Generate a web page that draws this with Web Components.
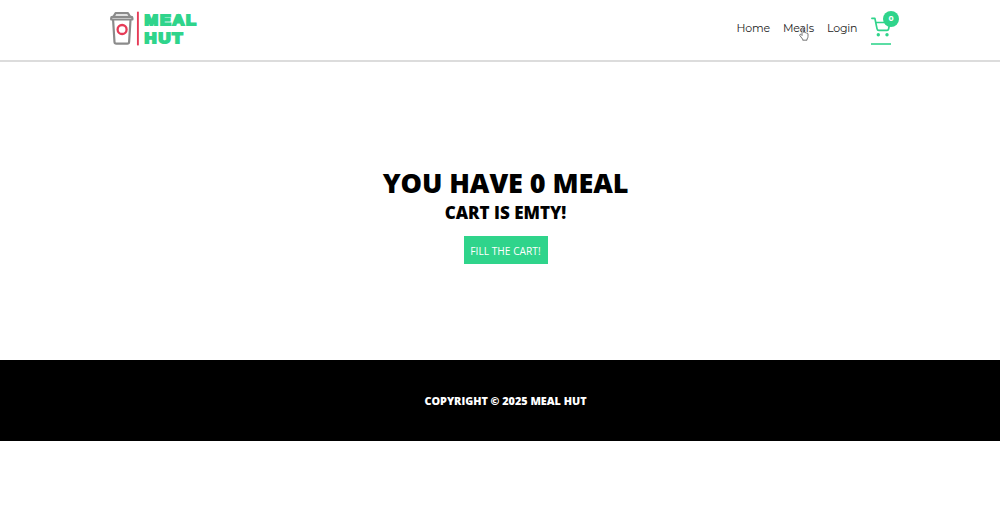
<!DOCTYPE html>
<html lang="en">
<head>
<meta charset="utf-8">
<title>Meal Hut</title>
<style>
  body {
    margin: 0;
    background: #fff;
    overflow: hidden;
    font-family: "Open Sans", sans-serif;
  }
</style>
</head>
<body>
<meal-app></meal-app>
<script>
const GREEN = "#2fd48b";

class MealLogo extends HTMLElement {
  constructor() {
    super();
    this.attachShadow({ mode: "open" });
  }

  static get styles() {
    return /* css */`
      :host { display: block; width: 90px; height: 38px; }
      svg { display: block; }
      text {
        font: 700 14.8px "Liberation Sans", sans-serif;
        letter-spacing: 1.5px;
        fill: ${GREEN};
        stroke: ${GREEN};
        stroke-width: 1.9px;
        stroke-linejoin: miter;
      }
    `;
  }

  connectedCallback() {
    this.shadowRoot.innerHTML = /* html */`
    <style>${MealLogo.styles}</style>
    <svg width="90" height="38" viewBox="0 0 90 38" fill="none">
      <g stroke="#8b8b8b" stroke-width="2.2" stroke-linejoin="round" stroke-linecap="round">
        <path d="M3.7 6.4 5.5 3.2H17.9L19.9 6.4"/>
        <path d="M1.2 9.5V8Q1.2 6.8 2.4 6.8H21.2Q22.4 6.8 22.4 8V9.5Z"/>
        <path d="M3.1 10 4.5 32Q4.6 33.6 6.3 33.6H17.3Q19 33.6 19.1 32L20.5 10"/>
      </g>
      <circle cx="12.1" cy="19.5" r="4.5" stroke="#e63b57" stroke-width="2.3"/>
      <path d="M27.9 1.7V35.4" stroke="#e63b57" stroke-width="1.9"/>
      <text x="34.6" y="15.4" textLength="53" lengthAdjust="spacingAndGlyphs">MEAL</text>
      <text x="34.6" y="32.6" textLength="39.5" lengthAdjust="spacingAndGlyphs">HUT</text>
    </svg>`;
  }
}

class NavItem extends HTMLElement {
  constructor() {
    super();
    this.attachShadow({ mode: "open" });
  }

  static get styles() {
    return /* css */`
      :host {
        display: block;
        width: var(--item-width, auto);
        font: 400 11px/16px Montserrat, Inter, sans-serif;
        letter-spacing: var(--item-spacing, 0);
        color: #1c1c1c;
        white-space: nowrap;
      }
    `;
  }

  connectedCallback() {
    this.shadowRoot.innerHTML = /* html */`
    <style>${NavItem.styles}</style>
    <slot></slot>`;
  }
}

class CartLink extends HTMLElement {
  constructor() {
    super();
    this.attachShadow({ mode: "open" });
  }

  static get styles() {
    return /* css */`
      :host {
        display: block;
        position: relative;
        width: 20px;
        height: 27px;
        border-bottom: 2px solid #5bdda4;
      }
      svg { display: block; }
      .badge {
        position: absolute;
        left: 12px;
        top: -5px;
        width: 16px;
        height: 16px;
        border-radius: 50%;
        background: ${GREEN};
        color: #fff;
        font: 700 7.5px/16px Montserrat, Inter, sans-serif;
        text-align: center;
      }
    `;
  }

  connectedCallback() {
    this.shadowRoot.innerHTML = /* html */`
    <style>${CartLink.styles}</style>
    <svg width="20" height="22" viewBox="0 0 20 22" fill="none" stroke="${GREEN}" stroke-width="1.7" stroke-linecap="round" stroke-linejoin="round">
      <path d="M.9 2.3H3.9L6 12.6Q6.3 14.4 7.8 14.4H16.1Q17.3 14.4 17.6 13L18.9 6.5H4.8"/>
      <circle cx="7.3" cy="18.7" r="1.7" fill="${GREEN}" stroke="none"/>
      <circle cx="16" cy="18.7" r="1.7" fill="${GREEN}" stroke="none"/>
    </svg>
    <span class="badge"><slot></slot></span>`;
  }
}

class HandPointer extends HTMLElement {
  constructor() {
    super();
    this.attachShadow({ mode: "open" });
  }

  connectedCallback() {
    this.shadowRoot.innerHTML = /* html */`
    <style>
      :host { display: block; position: absolute; left: 799px; top: 27px; }
      svg { display: block; }
    </style>
    <svg width="10" height="14" viewBox="0 0 10 14" fill="#fff" stroke="#555" stroke-width=".8" stroke-linejoin="round">
      <path d="M3 8V1.6Q3 .6 3.8 .6T4.6 1.6V5.4Q5.5 4.8 6.1 5.7 7 5.2 7.5 6.2 8.8 5.8 9 7V9.4Q9 11 8 12V13.2H3.7V12.2L.8 8.5Q.4 7.5 1.3 7.3 2 7.2 3 8.5Z"/>
    </svg>`;
  }
}

class SiteHeader extends HTMLElement {
  constructor() {
    super();
    this.attachShadow({ mode: "open" });
  }

  static get styles() {
    return /* css */`
      :host {
        display: flex;
        justify-content: space-between;
        align-items: flex-start;
        box-sizing: border-box;
        height: 62px;
        padding: 10px 120px 0 110px;
        border-bottom: 2px solid #dcdcdc;
      }
      nav { display: flex; padding-top: 6px; }
      nav-item { margin-top: 4px; }
      .home { --item-width: 46.5px; --item-spacing: -.15px; }
      .meals { --item-width: 44px; --item-spacing: -.2px; }
      .login { --item-width: 44px; --item-spacing: -.2px; }
    `;
  }

  connectedCallback() {
    this.shadowRoot.innerHTML = /* html */`
    <style>${SiteHeader.styles}</style>
    <meal-logo></meal-logo>
    <nav>
      <nav-item class="home">Home</nav-item>
      <nav-item class="meals">Meals</nav-item>
      <nav-item class="login">Login</nav-item>
      <cart-link>0</cart-link>
    </nav>
    <hand-pointer></hand-pointer>`;
  }
}

class EmptyCart extends HTMLElement {
  constructor() {
    super();
    this.attachShadow({ mode: "open" });
  }

  static get styles() {
    return /* css */`
      :host {
        display: flex;
        flex-direction: column;
        align-items: center;
        box-sizing: border-box;
        height: 298px;
        padding-top: 103px;
        color: #000;
        text-transform: uppercase;
      }
      h1, h2 { margin: 0; font-weight: 800; white-space: nowrap; }
      h1 { font-size: 27px; line-height: 36px; letter-spacing: -.08px; }
      h2 { font-size: 17px; line-height: 24px; }
      button {
        width: 84px;
        height: 28px;
        margin-top: 11px;
        padding: 2px 0 0;
        border: 0;
        background: ${GREEN};
        color: #fff;
        font: 400 10.2px/14px "Open Sans", sans-serif;
        text-transform: uppercase;
        white-space: nowrap;
      }
    `;
  }

  connectedCallback() {
    this.shadowRoot.innerHTML = /* html */`
    <style>${EmptyCart.styles}</style>
    <h1>You have 0 meal</h1>
    <h2>Cart is emty!</h2>
    <button>Fill the cart!</button>`;
  }
}

class SiteFooter extends HTMLElement {
  constructor() {
    super();
    this.attachShadow({ mode: "open" });
  }

  static get styles() {
    return /* css */`
      :host {
        display: flex;
        align-items: center;
        justify-content: center;
        box-sizing: border-box;
        height: 81px;
        padding-top: 1px;
        background: #000;
        color: #fff;
        font: 800 10.8px/16px "Open Sans", sans-serif;
        text-transform: uppercase;
      }
    `;
  }

  connectedCallback() {
    this.shadowRoot.innerHTML = /* html */`
    <style>${SiteFooter.styles}</style>
    <span><slot></slot></span>`;
  }
}

class MealApp extends HTMLElement {
  constructor() {
    super();
    this.attachShadow({ mode: "open" });
  }

  connectedCallback() {
    this.shadowRoot.innerHTML = /* html */`
    <style>
      :host { display: block; width: 1011px; }
    </style>
    <site-header></site-header>
    <empty-cart></empty-cart>
    <site-footer>Copyright © 2025 Meal Hut</site-footer>`;
  }
}

customElements.define("meal-logo", MealLogo);
customElements.define("nav-item", NavItem);
customElements.define("cart-link", CartLink);
customElements.define("hand-pointer", HandPointer);
customElements.define("site-header", SiteHeader);
customElements.define("empty-cart", EmptyCart);
customElements.define("site-footer", SiteFooter);
customElements.define("meal-app", MealApp);
</script>
</body>
</html>
